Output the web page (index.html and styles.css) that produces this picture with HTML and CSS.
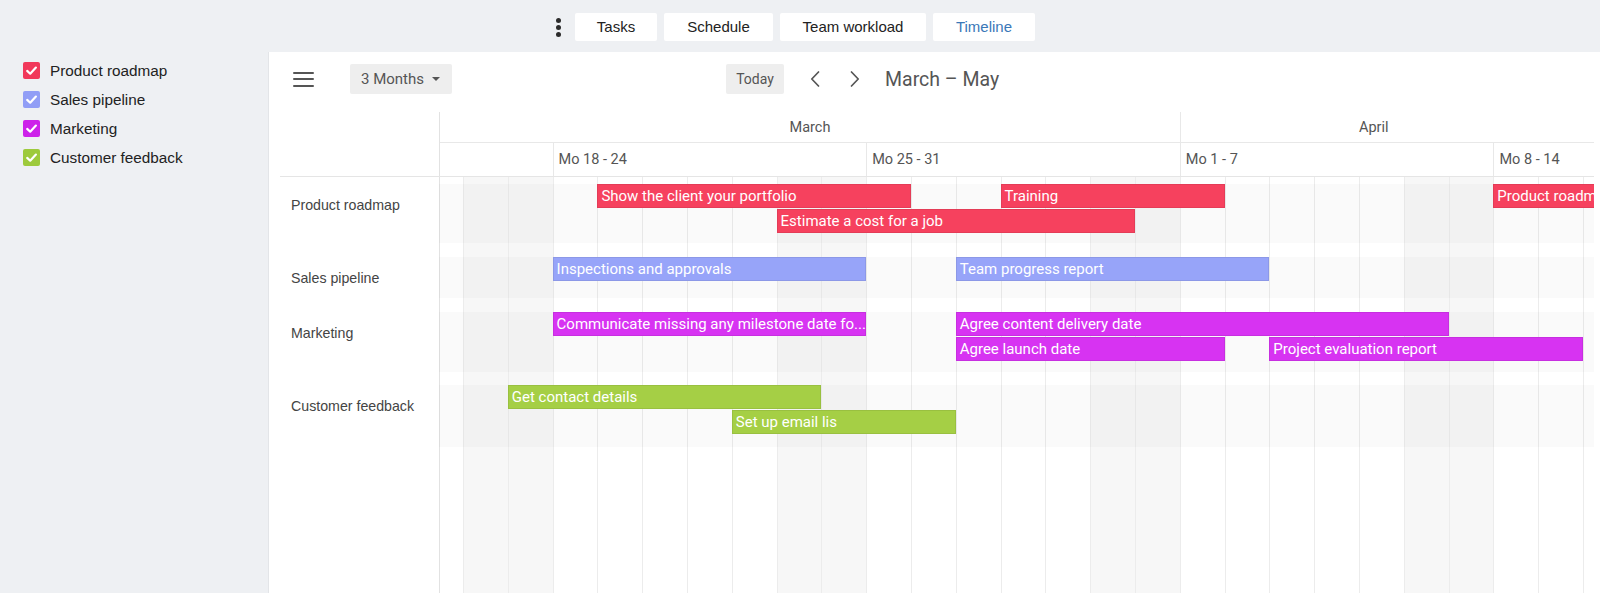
FILE: index.html
```html
<!DOCTYPE html>
<html lang="en">
<head>
<meta charset="utf-8">
<title>Timeline</title>
<link rel="stylesheet" href="styles.css">
</head>
<body>
<header class="topbar">
  <div class="kebab"><span></span><span></span><span></span></div>
  <nav class="tabs">
    <div class="tab tab-tasks">Tasks</div>
    <div class="tab tab-schedule">Schedule</div>
    <div class="tab tab-team">Team workload</div>
    <div class="tab tab-timeline active">Timeline</div>
  </nav>
</header>
<div class="main">
  <aside class="sidebar">
    <div class="cal"><span class="cb c-red"><svg viewBox="0 0 17 17" width="17" height="17"><path d="M4.2 8.9 L7.2 11.7 L12.9 5.6"/></svg></span>Product roadmap</div>
    <div class="cal"><span class="cb c-blue"><svg viewBox="0 0 17 17" width="17" height="17"><path d="M4.2 8.9 L7.2 11.7 L12.9 5.6"/></svg></span>Sales pipeline</div>
    <div class="cal"><span class="cb c-purple"><svg viewBox="0 0 17 17" width="17" height="17"><path d="M4.2 8.9 L7.2 11.7 L12.9 5.6"/></svg></span>Marketing</div>
    <div class="cal"><span class="cb c-green"><svg viewBox="0 0 17 17" width="17" height="17"><path d="M4.2 8.9 L7.2 11.7 L12.9 5.6"/></svg></span>Customer feedback</div>
  </aside>
  <section class="panel">
    <div class="toolbar">
      <div class="hamburger"><span></span><span></span><span></span></div>
      <div class="btn range">3 Months<span class="caret"></span></div>
      <div class="btn today">Today</div>
      <svg class="chev chev-left" viewBox="0 0 10 16" width="10" height="16"><path d="M8.5 1 L1.8 8 L8.5 15"/></svg>
      <svg class="chev chev-right" viewBox="0 0 10 16" width="10" height="16"><path d="M1.5 1 L8.2 8 L1.5 15"/></svg>
      <div class="title">March – May</div>
    </div>
    <div class="tl-header">
      <div class="hdr-label"></div>
      <div class="hdr-scale">
        <div class="months">
          <div class="month march">March</div>
          <div class="month april">April</div>
        </div>
        <div class="weeks">
          <div class="week week-first"></div>
          <div class="week">Mo 18 - 24</div>
          <div class="week">Mo 25 - 31</div>
          <div class="week">Mo 1 - 7</div>
          <div class="week">Mo 8 - 14</div>
        </div>
      </div>
    </div>
    <div class="tl-body">
      <div class="grid-bg"></div>

      <div class="row-label row-1">Product roadmap</div>
      <div class="track row-1">
        <div class="bar b-red" style="grid-column: 5 / 12; grid-row: 1;">Show the client your portfolio</div>
        <div class="bar b-red" style="grid-column: 9 / 17; grid-row: 2;">Estimate a cost for a job</div>
        <div class="bar b-red" style="grid-column: 14 / 19; grid-row: 1;">Training</div>
        <div class="bar b-red" style="grid-column: 25 / 31; grid-row: 1;">Product roadmap</div>
      </div>

      <div class="row-label row-2">Sales pipeline</div>
      <div class="track row-2">
        <div class="bar b-blue" style="grid-column: 4 / 11; grid-row: 1;">Inspections and approvals</div>
        <div class="bar b-blue" style="grid-column: 13 / 20; grid-row: 1;">Team progress report</div>
      </div>

      <div class="row-label row-3">Marketing</div>
      <div class="track row-3">
        <div class="bar b-purple" style="grid-column: 4 / 11; grid-row: 1;">Communicate missing any milestone date fo...</div>
        <div class="bar b-purple" style="grid-column: 13 / 24; grid-row: 1;">Agree content delivery date</div>
        <div class="bar b-purple" style="grid-column: 13 / 19; grid-row: 2;">Agree launch date</div>
        <div class="bar b-purple" style="grid-column: 20 / 27; grid-row: 2;">Project evaluation report</div>
      </div>

      <div class="row-label row-4">Customer feedback</div>
      <div class="track row-4">
        <div class="bar b-green" style="grid-column: 3 / 10; grid-row: 1;">Get contact details</div>
        <div class="bar b-green" style="grid-column: 8 / 13; grid-row: 2;">Set up email lis</div>
      </div>
    </div>
  </section>
</div>
</body>
</html>
```

FILE: styles.css
```css
* { box-sizing: border-box; }

html, body {
  margin: 0;
  padding: 0;
  height: 100%;
}

body {
  background: #eef0f3;
  font-family: "Liberation Sans", Arial, sans-serif;
  color: #222;
  overflow: hidden;
}

/* ---------- top bar ---------- */
.topbar {
  height: 52px;
  display: flex;
  align-items: flex-start;
  padding-top: 13px;
  padding-left: 556px;
}

.kebab {
  width: 5px;
  height: 28px;
  display: flex;
  flex-direction: column;
  justify-content: center;
  gap: 2px;
}
.kebab span {
  width: 5px;
  height: 5px;
  border-radius: 50%;
  background: #2b2b2b;
}

.tabs {
  display: flex;
  gap: 7px;
  margin-left: 14px;
}

.tab {
  height: 28px;
  line-height: 28px;
  background: #fff;
  border-radius: 2px;
  font-size: 15px;
  color: #222;
  text-align: center;
}
.tab-tasks { width: 82px; }
.tab-schedule { width: 109px; }
.tab-team { width: 146px; }
.tab-timeline { width: 102px; }
.tab.active { color: #3a78b8; }

/* ---------- layout ---------- */
.main {
  display: flex;
  height: 541px;
}

.sidebar {
  width: 268px;
  flex: none;
  padding: 4px 0 0 23px;
}

.cal {
  height: 29px;
  display: flex;
  align-items: center;
  gap: 10px;
  font-size: 15.3px;
  color: #222;
}

.cb {
  width: 17px;
  height: 17px;
  border-radius: 2px;
  display: block;
}
.cb svg { display: block; }
.cb path {
  fill: none;
  stroke: #fff;
  stroke-width: 2.2;
  stroke-linecap: round;
  stroke-linejoin: round;
}
.c-red { background: #f1385a; }
.c-blue { background: #919ef6; }
.c-purple { background: #cd22ea; }
.c-green { background: #9dca3c; }

.panel {
  flex: 1;
  min-width: 0;
  background: #fff;
  border-left: 1px solid #e3e5e8;
  padding-right: 6px;
  display: flex;
  flex-direction: column;
  overflow: hidden;
}

/* ---------- toolbar ---------- */
.toolbar {
  flex: none;
  height: 30px;
  margin: 12px 0 18px;
  display: flex;
  align-items: center;
  font-family: Roboto, "Liberation Sans", sans-serif;
  color: #555;
}

.hamburger {
  margin-left: 24px;
  width: 21px;
  height: 15px;
  display: flex;
  flex-direction: column;
  justify-content: space-between;
}
.hamburger span {
  height: 2px;
  background: #555;
  border-radius: 1px;
}

.btn {
  height: 30px;
  background: #eeeeee;
  border-radius: 2px;
  display: flex;
  align-items: center;
}

.range {
  margin-left: 36px;
  width: 102px;
  padding-left: 11px;
  font-size: 15px;
  color: #555;
}
.caret {
  margin-left: 8px;
  width: 0;
  height: 0;
  border-left: 4px solid transparent;
  border-right: 4px solid transparent;
  border-top: 4px solid #555;
}

.today {
  margin-left: 274px;
  width: 58px;
  justify-content: center;
  font-size: 14px;
  color: #555;
}

.chev path {
  fill: none;
  stroke: #555;
  stroke-width: 1.7;
  stroke-linecap: round;
  stroke-linejoin: round;
}
.chev-left { margin-left: 26px; }
.chev-right { margin-left: 30px; }

.title {
  margin-left: 25px;
  font-size: 19.5px;
  color: #555;
}

/* ---------- timeline header ---------- */
.tl-header {
  flex: none;
  height: 65px;
  margin-left: 11px;
  display: flex;
  border-bottom: 1px solid #e5e5e5;
  font-family: Roboto, "Liberation Sans", sans-serif;
  font-size: 14.5px;
  color: #555;
  overflow: hidden;
}

.hdr-label {
  width: 159px;
  flex: none;
}

.hdr-scale {
  flex: 1;
  min-width: 0;
  border-left: 1px solid #e2e2e2;
  display: flex;
  flex-direction: column;
  overflow: hidden;
}

.months {
  height: 31px;
  display: flex;
  border-bottom: 1px solid #e8e8e8;
}
.month {
  line-height: 31px;
  white-space: nowrap;
}
.march {
  width: 740px;
  text-align: center;
  flex: none;
}
.april {
  flex: 1;
  border-left: 1px solid #e8e8e8;
  padding-left: 178px;
}

.weeks {
  flex: 1;
  display: flex;
}
.week {
  width: 313.6px;
  flex: none;
  border-left: 1px solid #e8e8e8;
  padding-left: 5px;
  line-height: 33px;
  white-space: nowrap;
}
.week-first {
  width: 112.6px;
  border-left: none;
}

/* ---------- timeline body ---------- */
.tl-body {
  flex: 1;
  display: grid;
  grid-template-columns: 170px minmax(0, 1fr);
  grid-template-rows: 7px 59px 14px 41px 14px 60px 13px 62px 1fr;
}

.grid-bg {
  grid-column: 2;
  grid-row: 1 / -1;
  background:
    linear-gradient(#e2e2e2, #e2e2e2) 0 0 / 1px 100% no-repeat,
    repeating-linear-gradient(to right, transparent 0 24px, #ececec 24px 25px, transparent 25px 44.8px),
    repeating-linear-gradient(to right, transparent 0 24px, #f7f7f7 24px 113.6px, transparent 113.6px 313.6px);
}

.row-label {
  grid-column: 1;
  padding-left: 22px;
  line-height: 43px;
  font-size: 14.2px;
  color: #444;
  white-space: nowrap;
}

.track {
  grid-column: 2;
  display: grid;
  grid-template-columns: 24px repeat(30, 44.8px);
  grid-auto-rows: 24px;
  row-gap: 1px;
  align-content: start;
  background: rgba(0, 0, 0, 0.018);
  overflow: hidden;
}

.row-1 { grid-row: 2; }
.row-2 { grid-row: 4; }
.row-3 { grid-row: 6; }
.row-4 { grid-row: 8; }

.bar {
  height: 24px;
  line-height: 24px;
  padding: 0 4px;
  color: #fff;
  font-family: Roboto, "Liberation Sans", sans-serif;
  font-size: 15px;
  white-space: nowrap;
  overflow: hidden;
  box-shadow: inset 0 0 0 1px rgba(0, 0, 0, 0.07);
}
.b-red { background: #f6415e; }
.b-blue { background: #97a4f9; }
.b-purple { background: #d733f2; }
.b-green { background: #a5cf45; }
```
